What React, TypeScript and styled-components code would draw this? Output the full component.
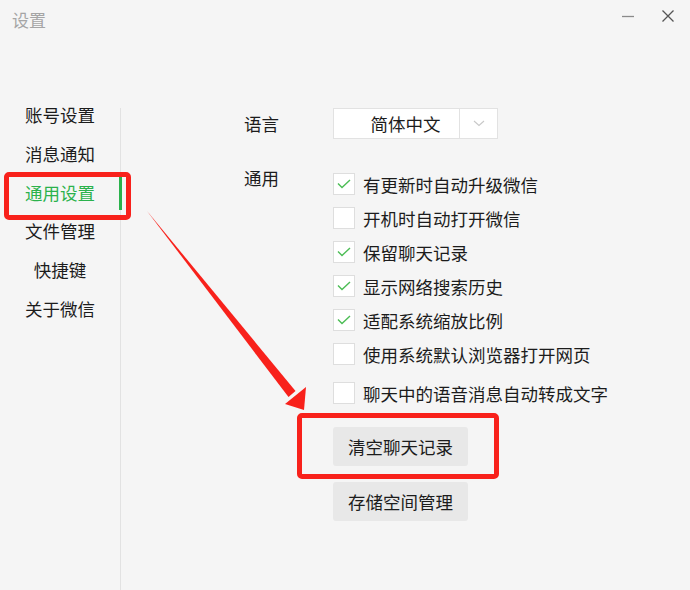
import styled, { createGlobalStyle } from "styled-components";

const GlobalStyle = createGlobalStyle`
  html, body {
    margin: 0;
    padding: 0;
    background: #f5f5f5;
  }
  * {
    box-sizing: border-box;
  }
`;

const GREEN = "#2bb24c";
const RED = "#f8211b";

const Window = styled.div`
  position: relative;
  width: 690px;
  height: 590px;
  overflow: hidden;
  background: #f5f5f5;
  font-family: "Noto Sans CJK SC", "Noto Sans", sans-serif;
  color: #1c1c1c;
`;

const TitleBar = styled.div`
  height: 40px;
  display: flex;
  align-items: center;
  padding-left: 12px;
`;

const Title = styled.div`
  flex: 1;
  font-size: 17px;
  color: #a5a5a5;
  margin-top: -1px;
`;

const Controls = styled.div`
  display: flex;
  align-items: center;
  gap: 16px;
  padding-right: 10px;
  margin-top: -8px;
`;

const ControlButton = styled.div`
  width: 24px;
  height: 24px;
  display: flex;
  align-items: center;
  justify-content: center;
`;

const Body = styled.div`
  display: flex;
  margin-top: 56px;
  height: 494px;
`;

const Sidebar = styled.nav`
  position: relative;
  width: 121px;
  flex-shrink: 0;

  &::after {
    content: "";
    position: absolute;
    top: 12px;
    bottom: 0;
    right: 0;
    width: 1px;
    background: #e2e2e2;
  }
`;

const NavItem = styled.div<{ $active?: boolean }>`
  position: relative;
  height: 38.8px;
  line-height: 38.8px;
  padding-right: 1px;
  text-align: center;
  font-size: 17.5px;
  color: ${(p) => (p.$active ? GREEN : "#1c1c1c")};

  ${(p) =>
    p.$active &&
    `
    &::after {
      content: "";
      position: absolute;
      right: -1px;
      top: 3px;
      bottom: 2px;
      width: 3px;
      background: ${GREEN};
      z-index: 1;
    }
  `}
`;

const Content = styled.div`
  flex: 1;
  padding: 12px 0 0 123px;
  display: grid;
  grid-template-columns: 89px auto;
  align-content: start;
`;

const Label = styled.div<{ $top?: number }>`
  font-size: 17.5px;
  line-height: 31px;
  margin-top: ${(p) => p.$top ?? 0}px;
`;

const Select = styled.div`
  display: flex;
  width: 165px;
  height: 31px;
  background: #fff;
  border: 1px solid #e2e2e2;
`;

const SelectValue = styled.div`
  width: 126px;
  padding-left: 18px;
  border-right: 1px solid #e2e2e2;
  text-align: center;
  font-size: 17.5px;
  line-height: 29px;
`;

const SelectArrow = styled.div`
  flex: 1;
  display: flex;
  align-items: center;
  justify-content: center;
`;

const CheckList = styled.div`
  margin-top: 28px;
  display: flex;
  flex-direction: column;
`;

const CheckRow = styled.label<{ $gapTop?: number }>`
  display: flex;
  align-items: center;
  height: 34px;
  gap: 8px;
  font-size: 17.5px;
  margin-top: ${(p) => p.$gapTop ?? 0}px;
`;

const Box = styled.span`
  width: 22px;
  height: 22px;
  flex-shrink: 0;
  background: #fff;
  border: 1px solid #dedede;
  display: flex;
  align-items: center;
  justify-content: center;
`;

const Actions = styled.div`
  grid-column: 2;
  display: flex;
  flex-direction: column;
  gap: 16px;
  margin-top: 17px;
`;

const ActionButton = styled.button`
  width: 135px;
  height: 39px;
  border: none;
  border-radius: 3px;
  background: #e8e8e8;
  color: #1c1c1c;
  font-family: inherit;
  font-size: 17.5px;
  padding: 0;
  cursor: pointer;
`;

const Highlight = styled.div<{ $x: number; $y: number; $w: number; $h: number }>`
  position: absolute;
  left: ${(p) => p.$x}px;
  top: ${(p) => p.$y}px;
  width: ${(p) => p.$w}px;
  height: ${(p) => p.$h}px;
  border: 5px solid ${RED};
  border-radius: 5px;
  pointer-events: none;
  z-index: 2;
`;

const ArrowLayer = styled.svg`
  position: absolute;
  left: 0;
  top: 0;
  pointer-events: none;
  z-index: 2;
`;

const navItems = ["账号设置", "消息通知", "通用设置", "文件管理", "快捷键", "关于微信"];

const options: { text: string; checked: boolean }[] = [
  { text: "有更新时自动升级微信", checked: true },
  { text: "开机时自动打开微信", checked: false },
  { text: "保留聊天记录", checked: true },
  { text: "显示网络搜索历史", checked: true },
  { text: "适配系统缩放比例", checked: true },
  { text: "使用系统默认浏览器打开网页", checked: false },
  { text: "聊天中的语音消息自动转成文字", checked: false },
];

const Check = () => (
  <svg width="14" height="10" viewBox="0 0 14 10">
    <path d="M1 4.5 L5 8.5 L13 1" fill="none" stroke="#4cbd55" strokeWidth="1.4" />
  </svg>
);

export default function App() {
  return (
    <>
      <GlobalStyle />
      <Window>
        <TitleBar>
          <Title>设置</Title>
          <Controls>
            <ControlButton>
              <svg width="14" height="14" viewBox="0 0 14 14">
                <path d="M1 7.5 H13" stroke="#8a8a8a" strokeWidth="1.3" />
              </svg>
            </ControlButton>
            <ControlButton>
              <svg width="14" height="14" viewBox="0 0 14 14">
                <path d="M1.5 1.5 L12.5 12.5 M12.5 1.5 L1.5 12.5" stroke="#555" strokeWidth="1.3" />
              </svg>
            </ControlButton>
          </Controls>
        </TitleBar>

        <Body>
          <Sidebar>
            {navItems.map((item) => (
              <NavItem key={item} $active={item === "通用设置"}>
                {item}
              </NavItem>
            ))}
          </Sidebar>

          <Content>
            <Label>语言</Label>
            <Select>
              <SelectValue>简体中文</SelectValue>
              <SelectArrow>
                <svg width="12" height="7" viewBox="0 0 12 7">
                  <path d="M1 1 L6 5.5 L11 1" fill="none" stroke="#c8c8c8" strokeWidth="1.1" />
                </svg>
              </SelectArrow>
            </Select>

            <Label $top={23}>通用</Label>
            <CheckList>
              {options.map((o, i) => (
                <CheckRow key={o.text} $gapTop={i === options.length - 1 ? 5 : 0}>
                  <Box>{o.checked && <Check />}</Box>
                  {o.text}
                </CheckRow>
              ))}
            </CheckList>

            <Actions>
              <ActionButton>清空聊天记录</ActionButton>
              <ActionButton>存储空间管理</ActionButton>
            </Actions>
          </Content>
        </Body>

        <Highlight $x={4} $y={172} $w={127} $h={48} />
        <Highlight $x={297} $y={413} $w={202} $h={66} />

        <ArrowLayer width="690" height="590" viewBox="0 0 690 590">
          <polygon points="147,211 295.5,391 288.5,397" fill={RED} />
          <polygon points="304,410 306,387 285,404" fill={RED} />
        </ArrowLayer>
      </Window>
    </>
  );
}
